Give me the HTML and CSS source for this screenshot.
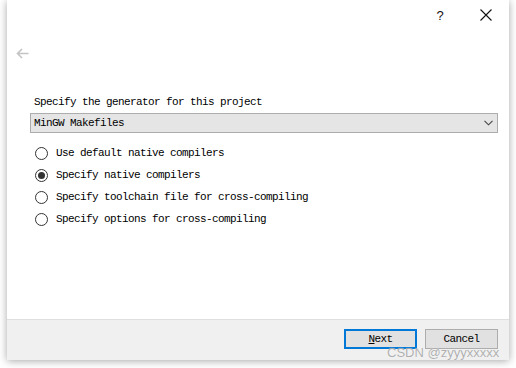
FILE: index.html
```html
<!DOCTYPE html>
<html>
<head>
<meta charset="utf-8">
<link rel="stylesheet" href="styles.css">
</head>
<body>
<div class="window">
  <div class="titlebar">
    <div class="cap-btn help">?</div>
    <div class="cap-btn close">
      <svg width="12" height="12" viewBox="0 0 12 12"><path d="M0.5 0.5 L11.5 11.5 M11.5 0.5 L0.5 11.5" stroke="#111" stroke-width="1.1" fill="none"/></svg>
    </div>
  </div>
  <div class="navrow">
    <svg class="back" width="13" height="11" viewBox="0 0 13 11"><path d="M12.5 5.5 H1.5 M6 1 L1.5 5.5 L6 10" stroke="#c4c4c4" stroke-width="1.6" fill="none"/></svg>
  </div>
  <div class="content">
    <div class="label">Specify the generator for this project</div>
    <div class="combo">
      <span class="combo-text">MinGW Makefiles</span>
      <svg class="chev" width="9" height="6" viewBox="0 0 9 6"><path d="M0.5 0.8 L4.5 4.8 L8.5 0.8" stroke="#444" stroke-width="1.1" fill="none"/></svg>
    </div>
    <div class="radios">
      <div class="radio-row"><span class="radio"></span><span>Use default native compilers</span></div>
      <div class="radio-row"><span class="radio checked"></span><span>Specify native compilers</span></div>
      <div class="radio-row"><span class="radio"></span><span>Specify toolchain file for cross-compiling</span></div>
      <div class="radio-row"><span class="radio"></span><span>Specify options for cross-compiling</span></div>
    </div>
  </div>
  <div class="footer">
    <div class="btn default"><span class="ul">N</span>ext</div>
    <div class="btn">Cancel</div>
  </div>
  <div class="watermark">CSDN @zyyyxxxxx</div>
</div>
</body>
</html>
```
FILE: styles.css
```css
html, body {
  margin: 0;
  padding: 0;
}
body {
  width: 516px;
  height: 368px;
  background: #ffffff;
  overflow: hidden;
  font-family: "Liberation Mono", "DejaVu Sans Mono", monospace;
  font-size: 11px;
  letter-spacing: -0.6px;
  color: #000;
}
.window {
  position: relative;
  margin-left: 7px;
  width: 502px;
  height: 360px;
  background: #fff;
  box-shadow: 0 1px 8px rgba(0,0,0,0.35);
  display: flex;
  flex-direction: column;
}
.titlebar {
  height: 30px;
  display: flex;
  justify-content: flex-end;
}
.cap-btn {
  width: 46px;
  height: 30px;
  display: flex;
  align-items: center;
  justify-content: center;
}
.help {
  font-family: "Liberation Sans", sans-serif;
  font-size: 13px;
  letter-spacing: 0;
  color: #111;
}
.navrow {
  height: 46px;
  display: flex;
  align-items: center;
  padding-left: 9px;
}
.content {
  padding-left: 23px;
  padding-top: 18px;
  flex: 1;
}
.label {
  padding-left: 4px;
  height: 16px;
  line-height: 16px;
}
.combo {
  margin-top: 3px;
  width: 459px;
  height: 18px;
  border: 1px solid #adadad;
  background: #e5e5e5;
  display: flex;
  align-items: center;
  justify-content: space-between;
  padding: 0 4px 0 3px;
  box-sizing: content-box;
}
.combo-text {
  line-height: 18px;
}
.radios {
  margin-top: 9px;
  display: flex;
  flex-direction: column;
}
.radio-row {
  height: 22px;
  display: flex;
  align-items: center;
  padding-left: 5px;
}
.radio {
  width: 11px;
  height: 11px;
  border: 1px solid #333;
  border-radius: 50%;
  background: #fff;
  margin-right: 8px;
  display: flex;
  align-items: center;
  justify-content: center;
  flex: none;
}
.radio.checked::after {
  content: "";
  width: 7px;
  height: 7px;
  border-radius: 50%;
  background: #333;
}
.footer {
  height: 41px;
  border-top: 1px solid #dfdfdf;
  background: #f0f0f0;
  display: flex;
  justify-content: flex-end;
  align-items: flex-start;
  padding: 9px 11px 0 0;
  gap: 8px;
  box-sizing: border-box;
}
.btn {
  width: 73px;
  height: 20px;
  box-sizing: border-box;
  border: 1px solid #adadad;
  background: #e1e1e1;
  display: flex;
  align-items: center;
  justify-content: center;
}
.btn.default {
  border: 2px solid #0078d7;
}
.ul {
  text-decoration: underline;
}
.watermark {
  position: absolute;
  left: 380px;
  top: 345px;
  font-family: "Liberation Sans", sans-serif;
  font-size: 13px;
  letter-spacing: 0;
  color: rgba(150,150,150,0.75);
  text-shadow: 0 0 1px rgba(255,255,255,0.8);
}
```
